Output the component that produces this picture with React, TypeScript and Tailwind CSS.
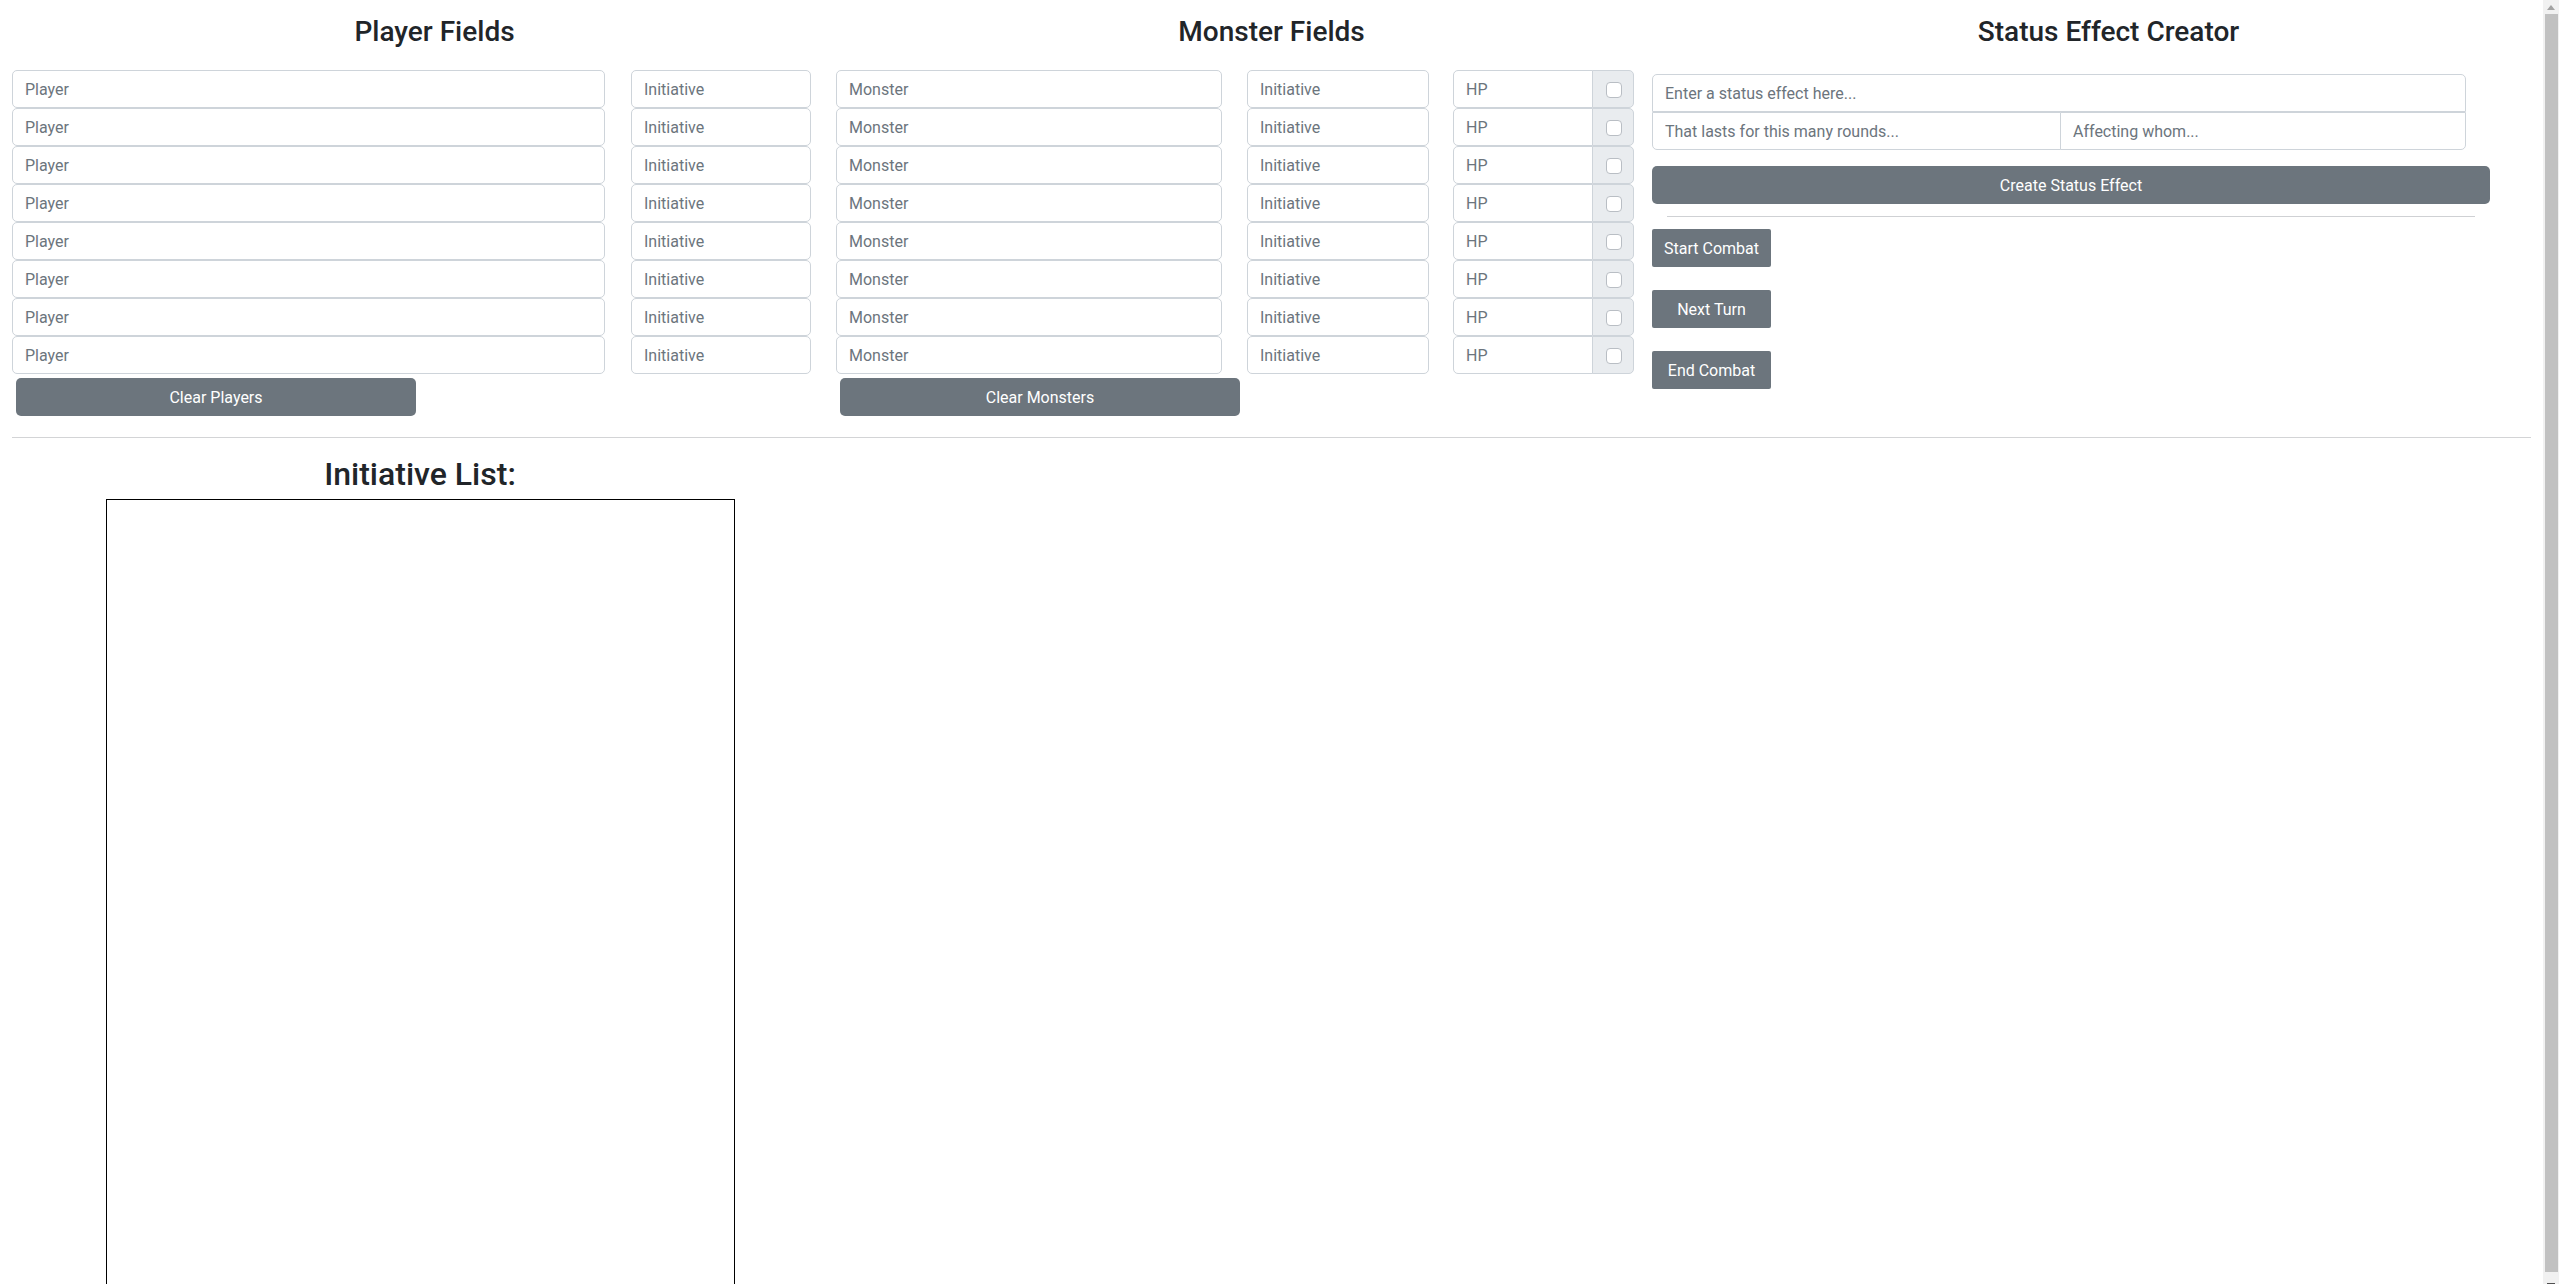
import React from "react";

const inputBase =
  "block h-[38px] px-[12px] text-[16px] bg-white border border-[#ced4da] text-[#212529] placeholder:text-[#6c757d] outline-none min-w-0";

const btn = "h-[38px] bg-[#6c757d] text-[16px] text-white pt-[2px]";

function Field({ placeholder, className }: { placeholder: string; className: string }) {
  return <input type="text" placeholder={placeholder} className={`${inputBase} ${className}`} />;
}

const rows = [0, 1, 2, 3, 4, 5, 6, 7];

export default function App() {
  return (
    <div className="flex h-[1284px] w-full overflow-hidden bg-white [font-family:Roboto,'Liberation_Sans',sans-serif] text-[#212529]">
      <main className="flex min-w-0 flex-1 flex-col">
        {/* headings */}
        <div className="grid grid-cols-3 px-[16px] pt-[15px]">
          <h3 className="text-center text-[28px] font-medium leading-[34px]">Player Fields</h3>
          <h3 className="text-center text-[28px] font-medium leading-[34px]">Monster Fields</h3>
          <h3 className="text-center text-[28px] font-medium leading-[34px]">Status Effect Creator</h3>
        </div>

        {/* fields */}
        <div className="mt-[21px] flex items-start pl-[12px]">
          {/* players */}
          <div className="flex w-[593px] shrink-0 flex-col">
            {rows.map((i) => (
              <Field key={i} placeholder="Player" className="w-full rounded-[5px]" />
            ))}
            <button className={`${btn} ml-[4px] mt-[4px] w-[400px] rounded-[5px]`}>Clear Players</button>
          </div>

          <div className="ml-[26px] flex w-[180px] shrink-0 flex-col">
            {rows.map((i) => (
              <Field key={i} placeholder="Initiative" className="w-full rounded-[5px]" />
            ))}
          </div>

          {/* monsters */}
          <div className="ml-[25px] flex w-[386px] shrink-0 flex-col">
            {rows.map((i) => (
              <Field key={i} placeholder="Monster" className="w-full rounded-[5px]" />
            ))}
            <button className={`${btn} ml-[4px] mt-[4px] w-[400px] rounded-[5px]`}>Clear Monsters</button>
          </div>

          <div className="ml-[25px] flex w-[182px] shrink-0 flex-col">
            {rows.map((i) => (
              <Field key={i} placeholder="Initiative" className="w-full rounded-[5px]" />
            ))}
          </div>

          <div className="ml-[24px] flex w-[181px] shrink-0 flex-col">
            {rows.map((i) => (
              <div key={i} className="flex h-[38px]">
                <Field placeholder="HP" className="w-[140px] rounded-l-[5px]" />
                <div className="-ml-px flex h-[38px] w-[42px] items-center justify-center rounded-r-[5px] border border-[#ced4da] bg-[#e9ecef] pl-[1px] pt-[2px]">
                  <span className="block h-[16px] w-[16px] rounded-[4px] border border-[#b9bec4] bg-white" />
                </div>
              </div>
            ))}
          </div>

          {/* status effect */}
          <div className="ml-[18px] flex w-[838px] shrink-0 flex-col pt-[4px]">
            <Field placeholder="Enter a status effect here..." className="w-[814px] rounded-t-[5px]" />
            <div className="flex w-[814px]">
              <Field placeholder="That lasts for this many rounds..." className="w-[409px] rounded-bl-[5px]" />
              <Field placeholder="Affecting whom..." className="-ml-px w-[406px] rounded-br-[5px]" />
            </div>
            <button className={`${btn} mt-[16px] w-full rounded-[5px]`}>Create Status Effect</button>
            <div className="mx-[15px] mt-[12px] h-px bg-[#cfd1d4]" />
            <button className={`${btn} mt-[12px] w-[119px] rounded-[2px]`}>Start Combat</button>
            <button className={`${btn} mt-[23px] w-[119px] rounded-[2px]`}>Next Turn</button>
            <button className={`${btn} mt-[23px] w-[119px] rounded-[2px]`}>End Combat</button>
          </div>
        </div>

        <div className="mx-[12px] mt-[21px] h-px shrink-0 bg-[#d3d4d6]" />

        {/* initiative list */}
        <div className="flex w-[840px] flex-col items-center">
          <h2 className="mt-[17px] text-[32px] font-medium leading-[38px]">Initiative List:</h2>
          <div className="mt-[6px] h-[900px] w-[629px] shrink-0 border border-black" />
        </div>
      </main>

      {/* scrollbar */}
      <div className="flex w-[16px] shrink-0 flex-col bg-[#f1f1f1]">
        <div className="flex h-[14px] items-center justify-center">
          <svg width="8" height="5" viewBox="0 0 8 5">
            <polygon points="4,0 8,5 0,5" fill="#a3a3a3" />
          </svg>
        </div>
        <div className="ml-[2px] w-[13px] flex-1 bg-[#c1c1c1]" />
        <div className="flex h-[12px] items-end justify-center">
          <svg width="8" height="1" viewBox="0 0 8 1">
            <rect x="0" y="0" width="8" height="1" fill="#505050" />
          </svg>
        </div>
      </div>
    </div>
  );
}
